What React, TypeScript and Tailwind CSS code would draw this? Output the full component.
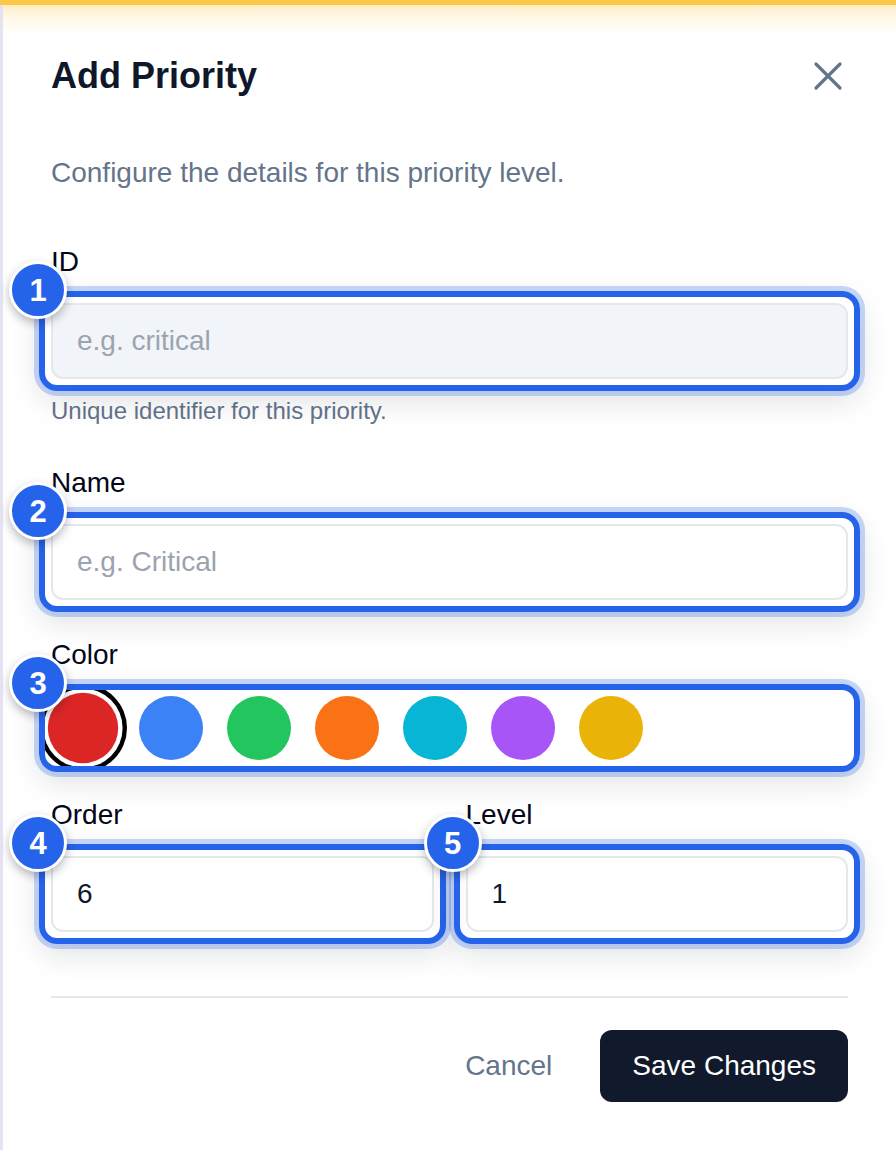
import React from "react";
import { X } from "lucide-react";

function Highlight({ n, children, className = "" }: { n: number; children: React.ReactNode; className?: string }) {
  return (
    <div className={"relative " + className}>
      {children}
      <div className="pointer-events-none absolute -inset-[12px] rounded-[18px] border-[6px] border-[#2563eb] shadow-[0_0_0_5px_rgba(37,99,235,0.25),0_10px_30px_rgba(15,23,42,0.13)]">
        <div className="absolute left-[-36px] top-[-36px] z-10 flex h-[58px] w-[58px] items-center justify-center rounded-full border-[3px] border-white bg-[#2563eb] text-[31px] font-bold leading-none text-white shadow-[0_4px_10px_rgba(15,23,42,0.3)]">
          {n}
        </div>
      </div>
    </div>
  );
}

const inputBase =
  "block h-[76px] w-full rounded-[12px] border-2 border-[#e5e7eb] px-[24px] text-[28px] text-[#0f172a] placeholder:text-[#9ca3af] outline-none";

export default function App() {
  const colors = ["#dc2626", "#3b82f6", "#22c55e", "#f97316", "#06b6d4", "#a855f7", "#eab308"];
  return (
    <div className="h-[1150px] w-[896px] overflow-hidden bg-white" style={{ fontFamily: '"Liberation Sans", Arial, sans-serif' }}>
      <div className="h-[5px] bg-[#fcc84a]" />
      <div className="h-[1145px] border-l-[3px] border-[#e3e3f3] bg-[linear-gradient(to_bottom,#ffeebf_0px,#fff7e3_10px,#ffffff_30px)] px-[48px] pt-[47px]">
        <div className="flex items-center justify-between">
          <h2 className="text-[36px] font-bold leading-[36px] text-[#0f172a]">Add Priority</h2>
          <X size={48} strokeWidth={1.6} className="mr-[-4px] text-[#64748b]" />
        </div>
        <p className="mt-[53px] text-[28px] leading-[40px] text-[#64748b]">Configure the details for this priority level.</p>

        <label className="mt-[55px] block text-[28px] leading-[28px] text-[#020617]">ID</label>
        <Highlight n={1} className="mt-[27px]">
          <input className={inputBase + " bg-[#f1f5f9]"} placeholder="e.g. critical" />
        </Highlight>
        <p className="mt-[16px] text-[24px] leading-[32px] text-[#64748b]">Unique identifier for this priority.</p>

        <label className="mt-[42px] block text-[28px] leading-[28px] text-[#020617]">Name</label>
        <Highlight n={2} className="mt-[27px]">
          <input className={inputBase + " bg-white"} placeholder="e.g. Critical" />
        </Highlight>

        <label className="mt-[41px] block text-[28px] leading-[28px] text-[#020617]">Color</label>
        <Highlight n={3} className="mt-[27px]">
          <div className="flex h-[64px] items-center gap-[24px]">
            {colors.map((c, i) => (
              <div
                key={c}
                className={
                  "h-[64px] w-[64px] shrink-0 rounded-full " +
                  (i === 0 ? "scale-110 shadow-[0_0_0_4px_#ffffff,0_0_0_8px_#000000]" : "")
                }
                style={{ backgroundColor: c }}
              />
            ))}
          </div>
        </Highlight>

        <div className="mt-[41px] grid grid-cols-2 gap-[32px]">
          <div>
            <label className="block text-[28px] leading-[28px] text-[#020617]">Order</label>
            <Highlight n={4} className="mt-[27px]">
              <input className={inputBase + " bg-white"} defaultValue="6" />
            </Highlight>
          </div>
          <div>
            <label className="block text-[28px] leading-[28px] text-[#020617]">Level</label>
            <Highlight n={5} className="mt-[27px]">
              <input className={inputBase + " bg-white"} defaultValue="1" />
            </Highlight>
          </div>
        </div>

        <div className="mt-[64px] h-[2px] bg-[#e5e7f0]" />

        <div className="mt-[32px] flex items-center justify-end gap-[16px]">
          <button className="h-[72px] px-[32px] text-[28px] text-[#64748b]">Cancel</button>
          <button className="h-[72px] rounded-[12px] bg-[#111a2c] px-[32px] text-[28px] text-white">Save Changes</button>
        </div>
      </div>
    </div>
  );
}
